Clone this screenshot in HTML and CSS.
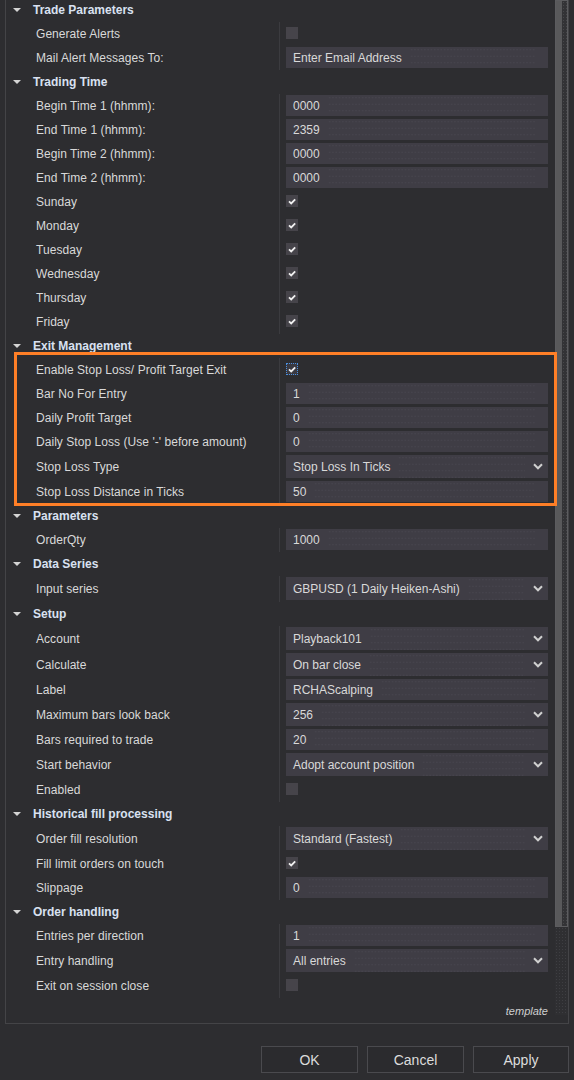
FILE: index.html
```html
<!DOCTYPE html>
<html>
<head>
<meta charset="utf-8">
<link rel="stylesheet" href="styles.css">
</head>
<body>
<div class="panel">
  <div class="list">
    <div class="hdr"><span class="tri"></span>Trade Parameters</div>
    <div class="row"><div class="lbl">Generate Alerts</div><div class="val"><span class="cb"></span></div></div>
    <div class="row"><div class="lbl">Mail Alert Messages To:</div><div class="val"><div class="box"><span>Enter Email Address</span><span class="fill"></span></div></div></div>

    <div class="hdr"><span class="tri"></span>Trading Time</div>
    <div class="row"><div class="lbl">Begin Time 1 (hhmm):</div><div class="val"><div class="box"><span>0000</span><span class="fill"></span></div></div></div>
    <div class="row"><div class="lbl">End Time 1 (hhmm):</div><div class="val"><div class="box"><span>2359</span><span class="fill"></span></div></div></div>
    <div class="row"><div class="lbl">Begin Time 2 (hhmm):</div><div class="val"><div class="box"><span>0000</span><span class="fill"></span></div></div></div>
    <div class="row"><div class="lbl">End Time 2 (hhmm):</div><div class="val"><div class="box"><span>0000</span><span class="fill"></span></div></div></div>
    <div class="row"><div class="lbl">Sunday</div><div class="val"><span class="cb"><svg viewBox="0 0 12 12"><path d="M3 6.3 L5.2 8.4 L9.2 4.3"/></svg></span></div></div>
    <div class="row"><div class="lbl">Monday</div><div class="val"><span class="cb"><svg viewBox="0 0 12 12"><path d="M3 6.3 L5.2 8.4 L9.2 4.3"/></svg></span></div></div>
    <div class="row"><div class="lbl">Tuesday</div><div class="val"><span class="cb"><svg viewBox="0 0 12 12"><path d="M3 6.3 L5.2 8.4 L9.2 4.3"/></svg></span></div></div>
    <div class="row"><div class="lbl">Wednesday</div><div class="val"><span class="cb"><svg viewBox="0 0 12 12"><path d="M3 6.3 L5.2 8.4 L9.2 4.3"/></svg></span></div></div>
    <div class="row"><div class="lbl">Thursday</div><div class="val"><span class="cb"><svg viewBox="0 0 12 12"><path d="M3 6.3 L5.2 8.4 L9.2 4.3"/></svg></span></div></div>
    <div class="row"><div class="lbl">Friday</div><div class="val"><span class="cb"><svg viewBox="0 0 12 12"><path d="M3 6.3 L5.2 8.4 L9.2 4.3"/></svg></span></div></div>

    <div class="hdr"><span class="tri"></span>Exit Management</div>
    <div class="row"><div class="lbl">Enable Stop Loss/ Profit Target Exit</div><div class="val"><span class="cb focus"><svg viewBox="0 0 12 12"><path d="M3 6.3 L5.2 8.4 L9.2 4.3"/></svg></span></div></div>
    <div class="row"><div class="lbl">Bar No For Entry</div><div class="val"><div class="box"><span>1</span><span class="fill"></span></div></div></div>
    <div class="row"><div class="lbl">Daily Profit Target</div><div class="val"><div class="box"><span>0</span><span class="fill"></span></div></div></div>
    <div class="row"><div class="lbl">Daily Stop Loss (Use '-' before amount)</div><div class="val"><div class="box"><span>0</span><span class="fill"></span></div></div></div>
    <div class="row dd"><div class="lbl">Stop Loss Type</div><div class="val"><div class="box"><span>Stop Loss In Ticks</span><span class="fill"></span><svg class="chev" viewBox="0 0 10 7"><path d="M1 1.3 L5 5.3 L9 1.3"/></svg></div></div></div>
    <div class="row"><div class="lbl">Stop Loss Distance in Ticks</div><div class="val"><div class="box"><span>50</span><span class="fill"></span></div></div></div>

    <div class="hdr"><span class="tri"></span>Parameters</div>
    <div class="row"><div class="lbl">OrderQty</div><div class="val"><div class="box"><span>1000</span><span class="fill"></span></div></div></div>

    <div class="hdr"><span class="tri"></span>Data Series</div>
    <div class="row dd"><div class="lbl">Input series</div><div class="val"><div class="box"><span>GBPUSD (1 Daily Heiken-Ashi)</span><span class="fill"></span><svg class="chev" viewBox="0 0 10 7"><path d="M1 1.3 L5 5.3 L9 1.3"/></svg></div></div></div>

    <div class="hdr"><span class="tri"></span>Setup</div>
    <div class="row dd"><div class="lbl">Account</div><div class="val"><div class="box"><span>Playback101</span><span class="fill"></span><svg class="chev" viewBox="0 0 10 7"><path d="M1 1.3 L5 5.3 L9 1.3"/></svg></div></div></div>
    <div class="row dd"><div class="lbl">Calculate</div><div class="val"><div class="box"><span>On bar close</span><span class="fill"></span><svg class="chev" viewBox="0 0 10 7"><path d="M1 1.3 L5 5.3 L9 1.3"/></svg></div></div></div>
    <div class="row"><div class="lbl">Label</div><div class="val"><div class="box"><span>RCHAScalping</span><span class="fill"></span></div></div></div>
    <div class="row dd"><div class="lbl">Maximum bars look back</div><div class="val"><div class="box"><span>256</span><span class="fill"></span><svg class="chev" viewBox="0 0 10 7"><path d="M1 1.3 L5 5.3 L9 1.3"/></svg></div></div></div>
    <div class="row"><div class="lbl">Bars required to trade</div><div class="val"><div class="box"><span>20</span><span class="fill"></span></div></div></div>
    <div class="row dd"><div class="lbl">Start behavior</div><div class="val"><div class="box"><span>Adopt account position</span><span class="fill"></span><svg class="chev" viewBox="0 0 10 7"><path d="M1 1.3 L5 5.3 L9 1.3"/></svg></div></div></div>
    <div class="row"><div class="lbl">Enabled</div><div class="val"><span class="cb"></span></div></div>

    <div class="hdr"><span class="tri"></span>Historical fill processing</div>
    <div class="row dd"><div class="lbl">Order fill resolution</div><div class="val"><div class="box"><span>Standard (Fastest)</span><span class="fill"></span><svg class="chev" viewBox="0 0 10 7"><path d="M1 1.3 L5 5.3 L9 1.3"/></svg></div></div></div>
    <div class="row"><div class="lbl">Fill limit orders on touch</div><div class="val"><span class="cb"><svg viewBox="0 0 12 12"><path d="M3 6.3 L5.2 8.4 L9.2 4.3"/></svg></span></div></div>
    <div class="row"><div class="lbl">Slippage</div><div class="val"><div class="box"><span>0</span><span class="fill"></span></div></div></div>

    <div class="hdr"><span class="tri"></span>Order handling</div>
    <div class="row"><div class="lbl">Entries per direction</div><div class="val"><div class="box"><span>1</span><span class="fill"></span></div></div></div>
    <div class="row dd"><div class="lbl">Entry handling</div><div class="val"><div class="box"><span>All entries</span><span class="fill"></span><svg class="chev" viewBox="0 0 10 7"><path d="M1 1.3 L5 5.3 L9 1.3"/></svg></div></div></div>
    <div class="row"><div class="lbl">Exit on session close</div><div class="val"><span class="cb"></span></div></div>

    <div class="tmpl">template</div>
  </div>
  <div class="scroll"><div class="thumb"></div></div>
</div>
<div class="btns">
  <div class="btn">OK</div>
  <div class="btn">Cancel</div>
  <div class="btn apply">Apply</div>
</div>
<div class="hl"></div>
</body>
</html>
```
FILE: styles.css
```css
* { box-sizing: border-box; }
html, body { margin: 0; padding: 0; }
body {
  width: 574px;
  height: 1080px;
  overflow: hidden;
  position: relative;
  background: #2d2d30;
  font-family: "Liberation Sans", Arial, sans-serif;
  font-size: 12px;
  color: #d9d9d9;
}
.panel {
  margin-left: 5px;
  width: 564px;
  height: 1024px;
  border: 1px solid #444447;
  border-top: 0;
  display: flex;
  overflow: hidden;
}
.list {
  flex: 1;
  min-width: 0;
  margin-top: -2px;
}
.hdr {
  height: 24px;
  display: flex;
  align-items: center;
  font-weight: bold;
  color: #d9e1f0;
}
.tri {
  width: 0;
  height: 0;
  border-left: 4px solid transparent;
  border-right: 4px solid transparent;
  border-top: 4px solid #d4d4d4;
  margin-left: 7px;
  margin-right: 12px;
}
.row {
  display: grid;
  grid-template-columns: 273px 1fr;
  height: 24px;
}
.row.dd { height: 26px; }
.lbl {
  padding-left: 30px;
  padding-top: 2px;
  line-height: 21px;
  white-space: nowrap;
  letter-spacing: 0.05px;
}
.dd .lbl { line-height: 23px; }
.val {
  border-left: 1px solid #3b3b3f;
  padding: 1px 7px 0 6px;
}
.box {
  height: 21px;
  background: #3f3d45;
  display: flex;
  align-items: center;
  padding: 0 5px 0 7px;
  white-space: nowrap;
}
.dd .box { height: 23px; }
.fill {
  flex: 1;
  align-self: stretch;
  margin: 0 8px 0 8px;
  background-image: radial-gradient(circle, #47454e 0.5px, transparent 0.8px);
  background-size: 3.3px 6.5px;
  background-position: 0 6px;
}
.chev {
  width: 10px;
  height: 7px;
  fill: none;
  stroke: #d0d0d0;
  stroke-width: 2;
}
.cb {
  display: block;
  width: 12px;
  height: 12px;
  margin-top: 4px;
  background: #46444a;
}
.cb svg {
  display: block;
  width: 12px;
  height: 12px;
  fill: none;
  stroke: #f0f0f0;
  stroke-width: 1.8;
}
.cb.focus {
  border: 1px dotted #4a8fe0;
  background: #3a3940;
}
.cb.focus svg { margin: -1px; }
.tmpl {
  margin-top: 6px;
  line-height: 14px;
  text-align: right;
  padding-right: 7px;
  font-style: italic;
  font-size: 11px;
  color: #cfcfcf;
}
.scroll {
  width: 13px;
  height: 1015px;
  background-color: #2f2f32;
  background-image: radial-gradient(circle, #3e3e42 0.6px, transparent 0.9px);
  background-size: 3px 3px;
}
.thumb {
  height: 927px;
  border: 1px solid #5c5c5f;
  background-color: #333336;
  background-image:
    linear-gradient(to right, #59595b 0, #59595b 6px, transparent 6px),
    radial-gradient(circle, #48484b 0.6px, transparent 0.9px);
  background-size: auto, 3px 3px;
}
.btns {
  display: flex;
  justify-content: flex-end;
  gap: 9px;
  padding-right: 5px;
  margin-top: 22px;
}
.btn {
  width: 97px;
  height: 27px;
  border: 1px solid #4a4a4e;
  background: #2b2b2e;
  color: #dcdcdc;
  font-size: 14px;
  display: flex;
  align-items: center;
  justify-content: center;
}
.btn.apply { width: 96px; }
.hl {
  position: absolute;
  left: 14px;
  top: 352px;
  width: 543px;
  height: 154px;
  border: 3px solid #ff7f27;
  pointer-events: none;
}
```
